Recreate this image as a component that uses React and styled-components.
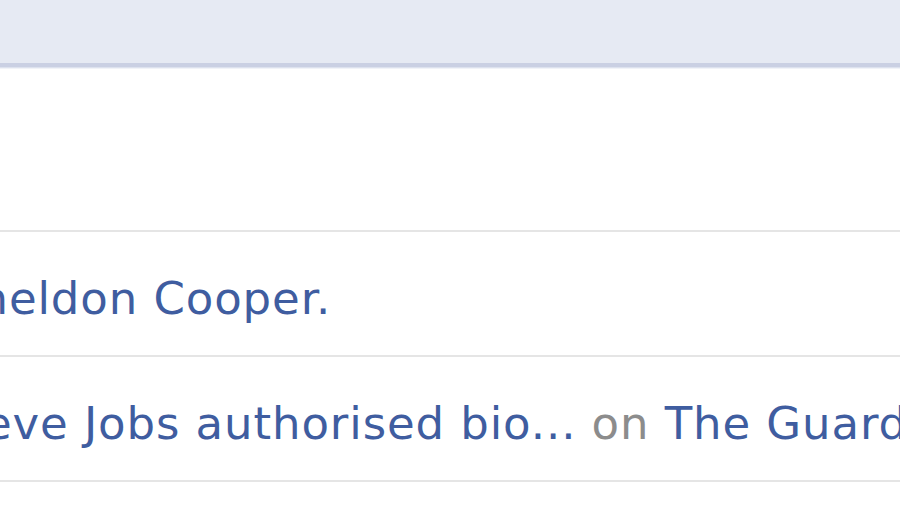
import styled, { createGlobalStyle } from "styled-components";

const GlobalStyle = createGlobalStyle`
  html, body {
    margin: 0;
    padding: 0;
    background: #ffffff;
    overflow: hidden;
  }
  body {
    font-family: "DejaVu Sans", "Liberation Sans", sans-serif;
  }
`;

const Page = styled.div`
  width: 900px;
  height: 506px;
  overflow: hidden;
  display: flex;
  flex-direction: column;
`;

const TopBar = styled.div`
  height: 63px;
  background: #e6eaf3;
  border-bottom: 4px solid #cad0e3;
  box-shadow: 0 1px 0 #dde2ee, 0 2px 0 #f1f3f8;
`;

const Spacer = styled.div`
  height: 163px;
`;

const Row = styled.div`
  border-top: 2px solid #e5e5e5;
  padding: 41px 0 31px;
  height: 51px;
  white-space: nowrap;
  font-size: 45px;
  line-height: 51px;
  margin-left: ${(p) => p.$shift}px;
  letter-spacing: 0.9px;
`;

const Link = styled.span`
  color: #3f5da0;
`;

const Muted = styled.span`
  color: #8c8c8c;
`;

const Rule = styled.div`
  border-top: 2px solid #e5e5e5;
`;

export default function App() {
  return (
    <Page>
      <GlobalStyle />
      <TopBar />
      <Spacer />
      <Row $shift={-50}>
        <Link>Sheldon Cooper.</Link>
      </Row>
      <Row $shift={-64}>
        <Link>Steve Jobs authorised bio...</Link> <Muted>on</Muted>{" "}
        <Link>The Guardian</Link>
      </Row>
      <Rule />
    </Page>
  );
}
